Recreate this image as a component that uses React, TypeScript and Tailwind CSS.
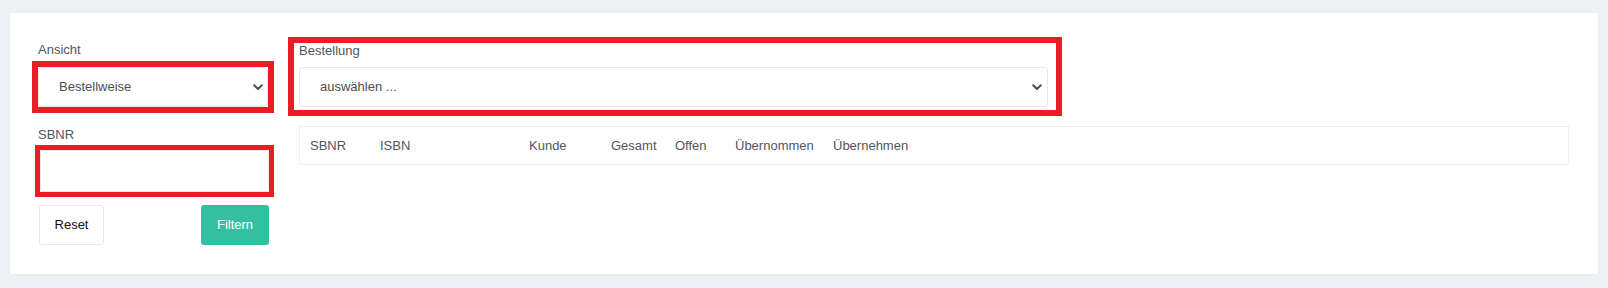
import React from "react";

function Chevron() {
  return (
    <svg width="10" height="7" viewBox="0 0 10 7" fill="none">
      <path d="M1.2 1.3 L5 5 L8.8 1.3" stroke="#4b5056" strokeWidth="2" strokeLinecap="round" strokeLinejoin="round" />
    </svg>
  );
}

export default function App() {
  const font = { fontFamily: '"Liberation Sans", Arial, sans-serif' };
  const cols: [string, string][] = [
    ["SBNR", "w-[70px]"],
    ["ISBN", "w-[149px]"],
    ["Kunde", "w-[82px]"],
    ["Gesamt", "w-[64px]"],
    ["Offen", "w-[60px]"],
    ["Übernommen", "w-[98px]"],
    ["Übernehmen", "flex-1"],
  ];
  return (
    <div className="w-[1608px] h-[288px] bg-[#eff0f6] pl-[10px] pr-[10px] pt-[13px]" style={font}>
      <div className="w-[1588px] h-[261px] bg-white shadow-[0_1px_4px_rgba(0,0,0,0.04)] flex pl-[28px] pr-[29px] pt-[29px] text-[13px] text-[#50565c]">
        {/* left column */}
        <div className="w-[231px] flex flex-col">
          <div className="h-[16px] leading-[16px]">Ansicht</div>
          <div className="mt-[9px] w-[230px] h-[40px] outline-[6px] outline-solid outline-[#ed1c24]">
            <div className="w-full h-full border border-[#e6e8ee] rounded-[3px] bg-white flex items-center justify-between pl-[20px] pr-[4px]">
              <span className="text-[#495057]">Bestellweise</span>
              <Chevron />
            </div>
          </div>
          <div className="mt-[20px] h-[16px] leading-[16px]">SBNR</div>
          <div className="mt-[7px] ml-[2px] w-[229px] h-[42px] outline-[5px] outline-solid outline-[#ed1c24]">
            <div className="w-full h-full border border-[#e6e8ee] rounded-[2px] bg-white" />
          </div>
          <div className="mt-[13px] flex justify-between pl-[1px]">
            <div className="w-[65px] h-[40px] border border-[#e6e8ee] rounded-[3px] bg-white flex items-center justify-center text-[#111]">Reset</div>
            <div className="w-[68px] h-[40px] rounded-[3px] bg-[#35bfa1] flex items-center justify-center text-white">Filtern</div>
          </div>
        </div>
        {/* right column */}
        <div className="ml-[25px] flex-1 flex flex-col pt-[1px]">
          <div className="w-[762px] outline-[6px] outline-solid outline-[#ed1c24] pl-[5px] pr-[8px] pb-[3px]">
            <div className="h-[16px] leading-[16px]">Bestellung</div>
            <div className="mt-[8px] h-[40px] border border-[#e6e8ee] rounded-[3px] bg-white flex items-center justify-between pl-[20px] pr-[5px]">
              <span className="text-[#495057]">auswählen ...</span>
              <Chevron />
            </div>
          </div>
          <div className="mt-[16px] ml-[5px] h-[39px] border border-[#eef0f3] flex items-center">
            {cols.map(([c, w]) => (
              <div key={c} className={`${w} pl-[10px]`}>{c}</div>
            ))}
          </div>
        </div>
      </div>
    </div>
  );
}
